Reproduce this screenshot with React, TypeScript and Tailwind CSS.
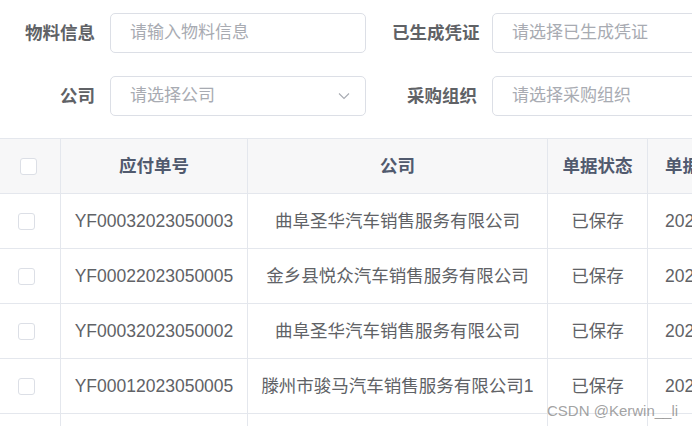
import React from "react";

const rows = [
  { no: "YF00032023050003", co: "曲阜圣华汽车销售服务有限公司" },
  { no: "YF00022023050005", co: "金乡县悦众汽车销售服务有限公司" },
  { no: "YF00032023050002", co: "曲阜圣华汽车销售服务有限公司" },
  { no: "YF00012023050005", co: "滕州市骏马汽车销售服务有限公司1" },
];

function Chevron() {
  return (
    <svg width="14" height="14" viewBox="0 0 14 14" fill="none" className="shrink-0">
      <path d="M2 4.5 L7 9.5 L12 4.5" stroke="#a8abb2" strokeWidth="1.1" />
    </svg>
  );
}

function Box({ offset }: { offset: string }) {
  return <div className={`w-[17px] h-[17px] shrink-0 border border-[#dcdfe6] rounded-[3px] bg-white ${offset}`} />;
}

export default function App() {
  return (
    <div
      className="relative w-[692px] h-[426px] overflow-hidden bg-white"
      style={{ fontFamily: '"Liberation Sans", "Noto Sans CJK SC", sans-serif' }}
    >
      <div className="pt-[13px] pl-[10px] flex flex-col gap-[23px] w-[1000px]">
        <div className="flex items-center whitespace-nowrap">
          <div className="w-[100px] shrink-0 pr-[15px] text-right font-bold text-[17.5px] text-[#606266]">物料信息</div>
          <div className="w-[256px] h-[40px] shrink-0 border border-[#dcdfe6] rounded-[5px] pl-[19px] flex items-center text-[17px] text-[#a8abb2]">
            请输入物料信息
          </div>
          <div className="ml-[26px] w-[100px] shrink-0 pr-[15px] text-right font-bold text-[17.5px] text-[#606266]">已生成凭证</div>
          <div className="w-[256px] h-[40px] shrink-0 border border-[#dcdfe6] rounded-[5px] pl-[19px] flex items-center text-[17px] text-[#a8abb2]">
            请选择已生成凭证
          </div>
        </div>
        <div className="flex items-center whitespace-nowrap">
          <div className="w-[100px] shrink-0 pr-[15px] text-right font-bold text-[17.5px] text-[#606266]">公司</div>
          <div className="w-[256px] h-[40px] shrink-0 border border-[#dcdfe6] rounded-[5px] pl-[19px] pr-[14px] flex items-center justify-between text-[17px] text-[#a8abb2]">
            <span>请选择公司</span>
            <Chevron />
          </div>
          <div className="ml-[26px] w-[100px] shrink-0 pr-[15px] text-right font-bold text-[17.5px] text-[#606266]">采购组织</div>
          <div className="w-[256px] h-[40px] shrink-0 border border-[#dcdfe6] rounded-[5px] pl-[19px] flex items-center text-[17px] text-[#a8abb2]">
            请选择采购组织
          </div>
        </div>
      </div>

      <div className="mt-[22px] border-t border-[#e4e7ed] w-[900px]">
        <div className="flex h-[55px] border-b border-[#e4e7ed] bg-[#f7f7f8] font-bold text-[17.5px] text-[#515a6e] whitespace-nowrap">
          <div className="w-[61px] shrink-0 border-r border-[#e4e7ed] flex items-center">
            <Box offset="ml-[20px]" />
          </div>
          <div className="w-[187px] shrink-0 border-r border-[#e4e7ed] flex items-center justify-center">应付单号</div>
          <div className="w-[300px] shrink-0 border-r border-[#e4e7ed] flex items-center justify-center">公司</div>
          <div className="w-[100px] shrink-0 border-r border-[#e4e7ed] flex items-center justify-center">单据状态</div>
          <div className="w-[200px] shrink-0 pl-[17px] flex items-center">单据日期</div>
        </div>
        {rows.map((r) => (
          <div key={r.no} className="flex h-[55px] border-b border-[#e4e7ed] text-[17.5px] text-[#606266] whitespace-nowrap">
            <div className="w-[61px] shrink-0 border-r border-[#e4e7ed] flex items-center">
              <Box offset="ml-[18px]" />
            </div>
            <div className="w-[187px] shrink-0 border-r border-[#e4e7ed] flex items-center justify-center">{r.no}</div>
            <div className="w-[300px] shrink-0 border-r border-[#e4e7ed] flex items-center justify-center">{r.co}</div>
            <div className="w-[100px] shrink-0 border-r border-[#e4e7ed] flex items-center justify-center">已保存</div>
            <div className="w-[200px] shrink-0 pl-[17px] flex items-center">2023-05-06</div>
          </div>
        ))}
        <div className="flex h-[55px]">
          <div className="w-[61px] shrink-0 border-r border-[#e4e7ed]" />
          <div className="w-[187px] shrink-0 border-r border-[#e4e7ed]" />
          <div className="w-[300px] shrink-0 border-r border-[#e4e7ed]" />
          <div className="w-[100px] shrink-0 border-r border-[#e4e7ed]" />
        </div>
      </div>

      <div className="absolute left-[547px] top-[400px] text-[15px] text-[#8a8a8a]/80 whitespace-nowrap">
        CSDN @Kerwin__li
      </div>
    </div>
  );
}
